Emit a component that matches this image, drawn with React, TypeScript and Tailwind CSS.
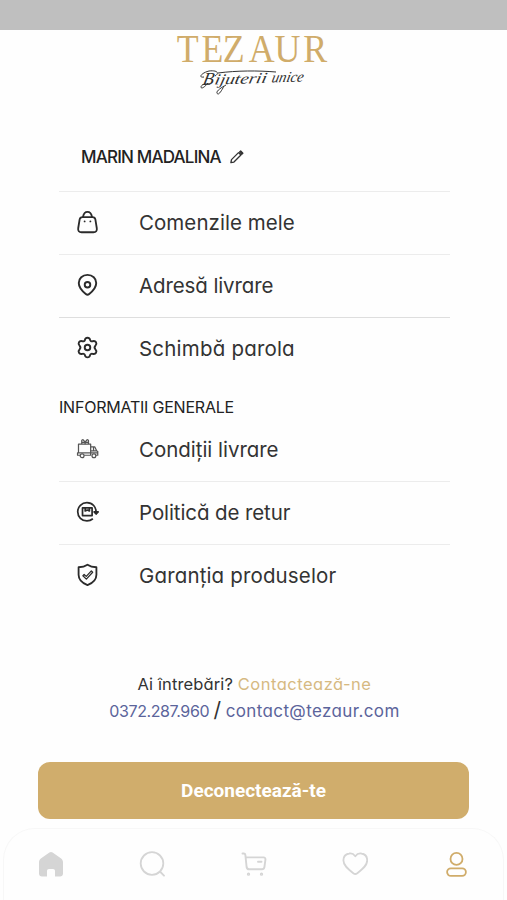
import React from 'react';

interface MenuItem {
  label: string;
  icon: React.ReactNode;
  spacing: string;
  divider: string;
}

const BagIcon = () => (
  <svg width="23" height="25" viewBox="0 0 24 26" fill="none" stroke="#2b2b2b" strokeWidth="1.9" strokeLinecap="round">
    <path d="M6.7 7.4h10.600c1.700 0 2.600.8 2.900 2.400l1.500 9.200c.4 2.700-.8 4.200-3.500 4.200H5.800c-2.700 0-3.900-1.500-3.500-4.200l1.500-9.200c.3-1.600 1.200-2.400 2.900-2.400Z" />
    <path d="M7.300 7.200C7.900 3.800 9.400 2 12 2s4.100 1.800 4.700 5.200" />
    <path d="M9 11.800v.1M15 11.800v.1" strokeWidth="1.900" />
  </svg>
);

const PinIcon = () => (
  <svg width="23" height="25" viewBox="0 0 24 26" fill="none" stroke="#2b2b2b" strokeWidth="2">
    <path d="M12 1.900c5.300 0 9.100 3.700 9.100 8.400 0 4.600-3.500 8.400-7.300 11.500-1.200 1-2.400 1-3.600 0C6.400 18.700 2.900 14.900 2.900 10.300 2.900 5.600 6.700 1.900 12 1.900Z" />
    <circle cx="12" cy="12.200" r="2.900" />
  </svg>
);

const GearIcon = () => (
  <svg width="23" height="25" viewBox="0 0 24 26" fill="none" stroke="#2b2b2b" strokeWidth="2" strokeLinejoin="round">
    <path d="M9.400 3.800C9.700 2.300 10.600 1.700 12 1.700s2.300.6 2.600 2.100c.3 1.400 1.400 2 2.800 1.600 1.700-.5 2.800-.1 3.500 1.100s.6 2.300-.6 3.500c-1.200 1.300-1.200 2.700 0 4 1.200 1.200 1.300 2.300.6 3.500s-1.800 1.600-3.500 1.100c-1.400-.4-2.500.2-2.800 1.600-.3 1.500-1.200 2.100-2.600 2.100s-2.300-.6-2.600-2.100c-.3-1.400-1.400-2-2.800-1.600-1.700.5-2.800.1-3.500-1.100s-.6-2.300.6-3.500c1.200-1.300 1.200-2.700 0-4-1.200-1.200-1.300-2.300-.6-3.500s1.800-1.600 3.500-1.100c1.400.4 2.500-.2 2.800-1.600Z" />
    <circle cx="12" cy="12" r="2.900" />
  </svg>
);

const TruckIcon = () => (
  <svg width="23" height="25" viewBox="0 0 24 26" fill="none" stroke="#555" strokeWidth="1.300" strokeLinejoin="round">
    <path d="M4.300 19H1.600v-2.500h1V7.500h12.700V19H8.500M15.300 10.200h4.200l2.200 4.300 1 .7V19h-1.900M15.300 14.500h6.400M18.300 10.400v4M15.300 16.500h7.400M2.600 16.500h12.700" />
    <circle cx="6.400" cy="19.500" r="2" />
    <circle cx="18.700" cy="19.500" r="2" />
    <path d="M6 7.300V3.700c0-1 1.300-1.200 2-.3l1.500 2 1.500-2c.7-.9 2-.7 2 .3v3.600M6 5.500h7M9.500 5.400v2" />
  </svg>
);

const ReturnIcon = () => (
  <svg width="23" height="25" viewBox="0 0 24 26" fill="none" stroke="#2b2b2b" strokeWidth="1.800" strokeLinejoin="round">
    <path d="M20.900 13.500C21.400 7 17 2.800 11.400 2.800c-5.400 0-9.600 4.200-9.600 9.500s4.200 9.500 9.600 9.500c2.700 0 4.600-.9 6.200-2.300" />
    <path d="M18.900 12.300l2.100 2.300 2.100-2.300Z" fill="#2b2b2b" />
    <path d="M6.800 8.200h10v8h-10ZM9.600 8.200v3.200l2.200-1 2.200 1V8.200" />
  </svg>
);

const ShieldIcon = () => (
  <svg width="23" height="25" viewBox="0 0 24 26" fill="none" stroke="#2b2b2b" strokeLinejoin="round" strokeLinecap="round">
    <path strokeWidth="1.900" d="M12 1.800c2.500 1.700 5.400 2.500 9.300 2.600v7.800c0 5-3.600 8.600-9.300 10.900-5.700-2.300-9.300-5.900-9.300-10.900V4.400c3.900-.1 6.800-.9 9.300-2.600Z" />
    <path strokeWidth="1.300" d="m7.200 13.200 1.300-1.300 2.200 2 5.300-5.700 1.400 1.400-6.600 7.200Z" />
  </svg>
);

const accountItems: MenuItem[] = [
  { label: 'Comenzile mele', icon: <BagIcon />, spacing: 'tracking-[0.05px]', divider: 'border-[#ececec]' },
  { label: 'Adresă livrare', icon: <PinIcon />, spacing: 'tracking-[-0.11px]', divider: 'border-[#ececec]' },
  { label: 'Schimbă parola', icon: <GearIcon />, spacing: 'tracking-[0.2px]', divider: 'border-[#dedede]' },
];

const infoItems: MenuItem[] = [
  { label: 'Condiții livrare', icon: <TruckIcon />, spacing: 'tracking-[-0.03px]', divider: 'border-transparent' },
  { label: 'Politică de retur', icon: <ReturnIcon />, spacing: 'tracking-[-0.1px]', divider: 'border-[#ececec]' },
  { label: 'Garanția produselor', icon: <ShieldIcon />, spacing: 'tracking-[0.15px]', divider: 'border-[#ececec]' },
];

const MenuRow: React.FC<{ item: MenuItem }> = ({ item }) => (
  <li className={`flex h-[63px] items-center border-t pl-[17px] ${item.divider}`}>
    <span className="-mt-0.5 w-[63px]">{item.icon}</span>
    <span className={`text-[20.500px] whitespace-nowrap text-[#333] ${item.spacing}`}>{item.label}</span>
  </li>
);

const Logo = () => (
  <svg className="mx-auto block overflow-visible" width="156" height="68" viewBox="175 30 156 68">
    <text
      x="192 219 242 270.500 298.500 329.500"
      y="62"
      transform="scale(.92 1)"
      fontFamily="Liberation Serif"
      fontSize="39"
      fill="#d0ac6a"
    >
      TEZAUR
    </text>
    <g transform="translate(202 85) rotate(-2) skewX(-14)" fontFamily="Liberation Serif" fontStyle="italic" fill="#303030">
      <text fontSize="18">B</text>
      <text x="12" fontSize="15" textLength="52" lengthAdjust="spacingAndGlyphs">ijuterii</text>
      <text x="69" fontSize="15" textLength="32" lengthAdjust="spacingAndGlyphs">unice</text>
    </g>
    <path d="M204 77c-6 1-3-4 5-6 8-1 11 2 6 5M218 73c19-2.500 40-2.500 58-1M208 83c-4 5-7 6-7 4s4-4 9-3M224 86c-3 6-6 10-7 7-1-2 5-6 9-8" fill="none" stroke="#333" strokeWidth="1" />
  </svg>
);

const BottomNav = () => (
  <nav className="mx-[3px] mt-[9px] flex h-[73px] shrink-0 items-center justify-between rounded-t-[32px] border border-b-0 border-[#f7f7f7] px-[34px] pb-[2px]">
    <svg width="26" height="28" viewBox="0 0 26 28" fill="#d5d5d5">
      <path d="M11.400 2.600c1-.7 2.200-.7 3.200 0l8.200 5.700c1.300.9 2.200 2.200 2.200 3.800v11.300c0 1.800-1.200 3.100-3 3.100h-5V21c0-1.200-.8-2-2-2h-4c-1.200 0-2 .8-2 2v5.500H4c-1.800 0-3-1.300-3-3.100V12.100c0-1.600.9-2.900 2.200-3.800Z" />
    </svg>
    <svg width="26" height="28" viewBox="0 0 26 28" fill="none" stroke="#d5d5d5" strokeWidth="1.800" strokeLinecap="round">
      <circle cx="13" cy="13.500" r="11.300" />
      <path d="m21.400 22 3.600 3.700" />
    </svg>
    <svg width="26" height="28" viewBox="0 0 26 28" fill="none" stroke="#d5d5d5" strokeWidth="1.900" strokeLinecap="round" strokeLinejoin="round">
      <path d="M1.500 3.500h1.200c1 0 1.600.6 1.700 1.600L5.600 17c.2 1.500 1 2.300 2.500 2.300h12.800c1.500 0 2.300-.7 2.500-2.100l1-7.400c.2-1.600-.5-2.400-2-2.400H5M17 11.800h3.500" />
      <circle cx="7.500" cy="24.200" r=".7" />
      <circle cx="20.500" cy="24.200" r=".7" />
    </svg>
    <svg width="26" height="28" viewBox="0 0 26 28" fill="none" stroke="#d5d5d5" strokeWidth="1.800" strokeLinejoin="round">
      <path d="M13.300 6.200c1.700-2.300 3.900-3.200 6.200-2.700 3.200.6 5.700 3.200 5.700 6.800 0 4.900-4 8.400-9.900 12.900-1.500 1.200-2.500 1.200-4 0C5.400 18.700 1.400 15.200 1.400 10.300c0-3.600 2.500-6.200 5.700-6.800 2.300-.5 4.500.4 6.200 2.700Z" />
    </svg>
    <svg width="26" height="28" viewBox="0 0 26 28" fill="none" stroke="#d0ac6a" strokeWidth="1.800">
      <circle cx="13.500" cy="8.900" r="6" />
      <rect x="4.100" y="18.300" width="18.800" height="7.600" rx="3.800" />
    </svg>
  </nav>
);

const App: React.FC = () => {
  return (
    <div className="flex h-[900px] w-[507px] flex-col overflow-hidden bg-[#fefefe] font-['Inter',sans-serif] [font-feature-settings:'cv11']">
      <div className="h-[30px] shrink-0 bg-[#bfbfbf]" />
      <header className="h-[96px] shrink-0 pr-[1px]">
        <Logo />
      </header>

      <main className="mr-[57px] ml-[59px] h-[635px] shrink-0">
        <div className="flex h-[65px] items-center pl-[22px]">
          <h1 className="-mt-[2px] text-[17px] font-medium tracking-[-0.8px] whitespace-nowrap text-[#222]">MARIN MADALINA</h1>
          <svg className="-mt-[3px] ml-[9px]" width="14" height="16" viewBox="0 0 16 18" fill="none" stroke="#333" strokeWidth="1.500" strokeLinejoin="round">
            <path d="M1 15.500 1.700 12 9.700 4l2.800 2.800-8 8Z" />
            <path d="m11 3.300 1.200-1.200 2.500 2.600-1.300 1.200Z" fill="#333" />
          </svg>
        </div>
        <ul>
          {accountItems.map((item) => (
            <MenuRow key={item.label} item={item} />
          ))}
        </ul>

        <h2 className="h-[38px] pt-[14px] text-[16px] leading-[26px] tracking-[-0.22px] whitespace-nowrap text-[#222]">INFORMATII GENERALE</h2>
        <ul>
          {infoItems.map((item) => (
            <MenuRow key={item.label} item={item} />
          ))}
        </ul>

        <div className="mt-[64px] text-center text-[16px] leading-[26px] whitespace-nowrap">
          <p className="text-[16.500px] tracking-[0.12px] text-[#333]">
            Ai întrebări? <span className="tracking-[0.5px] text-[#d6b981]">Contactează-ne</span>
          </p>
          <p className="text-[#5b649b]">
            <span className="tracking-[-0.4px]">0372.287.960</span> <span className="text-[21px] text-[#333]">/</span>{' '}
            <span className="text-[17px] tracking-[0.38px]">contact@tezaur.com</span>
          </p>
        </div>
      </main>

      <button className="mx-[38px] mt-px h-[57px] shrink-0 rounded-xl bg-[#d0ad6c] pt-px font-['Roboto',sans-serif] text-[19px] font-bold text-white">
        Deconectează-te
      </button>
      <BottomNav />
    </div>
  );
};

export default App;
